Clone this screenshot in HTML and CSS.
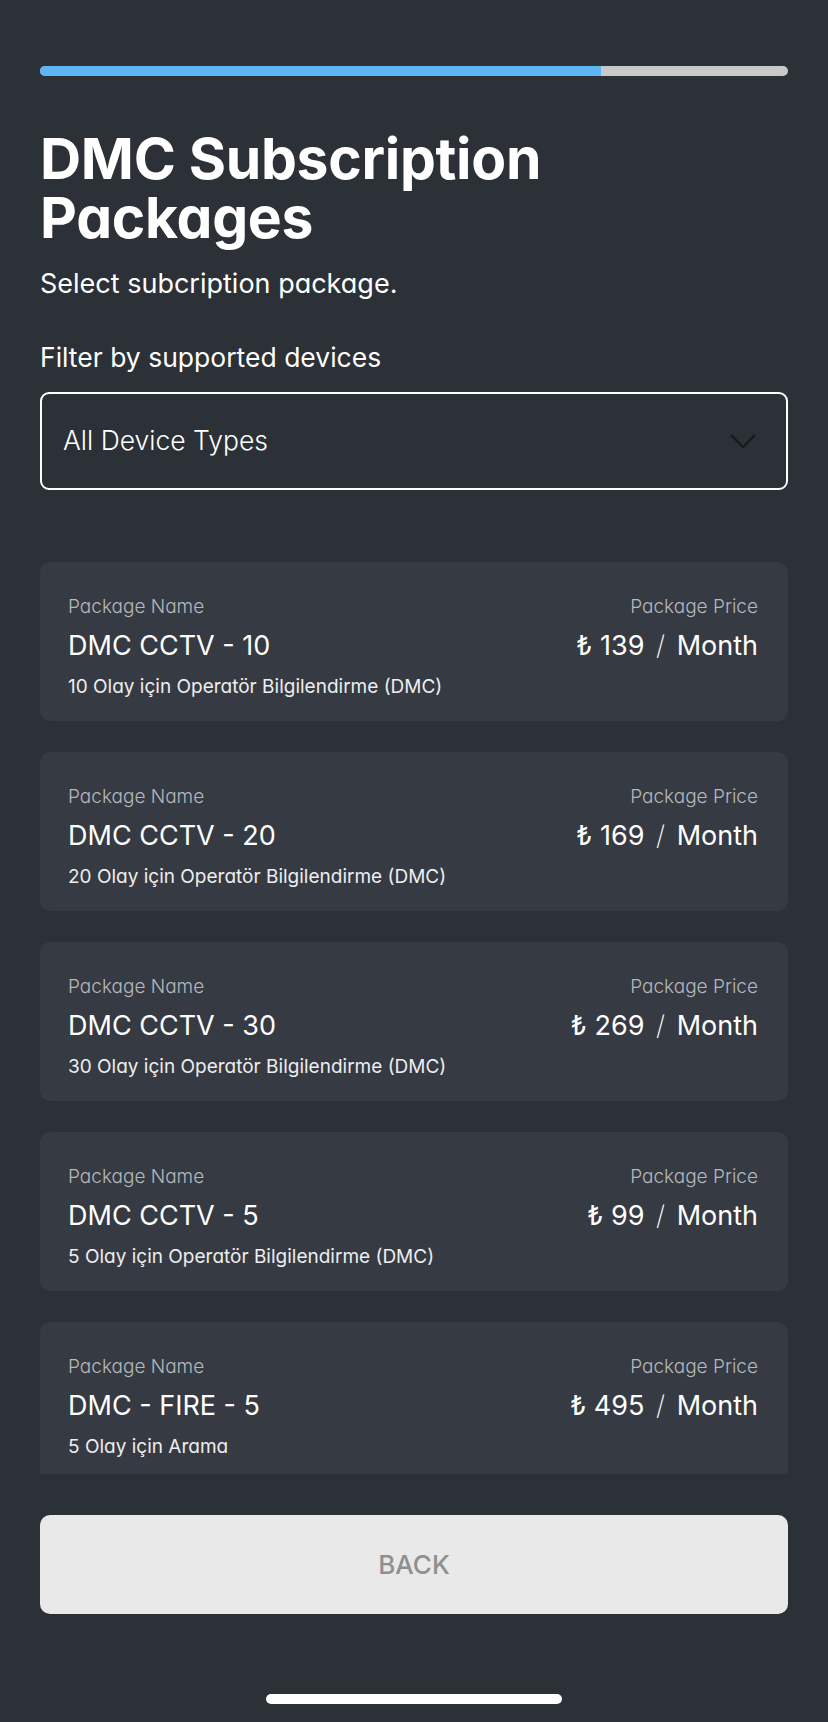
FILE: index.html
```html
<!DOCTYPE html>
<html lang="en">
<head>
    <meta charset="UTF-8">
    <meta name="viewport" content="width=device-width, initial-scale=1.0">
    <title>DMC Subscription Packages</title>
    <link rel="stylesheet" href="styles.css">
</head>
<body>

    <div class="screen">
        <!-- Progress -->
        <div class="progress">
            <div class="progress-fill" style="width: 75%"></div>
        </div>

        <h1 class="title">DMC Subscription Packages</h1>
        <p class="subtitle">Select subcription package.</p>

        <!-- Filter -->
        <div class="filter-label">Filter by supported devices</div>
        <div class="select">
            <span>All Device Types</span>
            <svg class="chevron" width="26" height="14" viewBox="0 0 26 14">
                <polyline points="1,1 13,13 25,1" fill="none" stroke="#16181b" stroke-width="2"/>
            </svg>
        </div>

        <!-- Package list -->
        <div class="package-list">
            <div class="package">
                <div class="package-info">
                    <div class="package-label">Package Name</div>
                    <div class="package-name">DMC CCTV - 10</div>
                    <div class="package-desc">10 Olay için Operatör Bilgilendirme (DMC)</div>
                </div>
                <div class="package-price">
                    <div class="package-label">Package Price</div>
                    <div class="price">₺ 139 <span class="slash">/</span> Month</div>
                </div>
            </div>
            <div class="package">
                <div class="package-info">
                    <div class="package-label">Package Name</div>
                    <div class="package-name">DMC CCTV - 20</div>
                    <div class="package-desc">20 Olay için Operatör Bilgilendirme (DMC)</div>
                </div>
                <div class="package-price">
                    <div class="package-label">Package Price</div>
                    <div class="price">₺ 169 <span class="slash">/</span> Month</div>
                </div>
            </div>
            <div class="package">
                <div class="package-info">
                    <div class="package-label">Package Name</div>
                    <div class="package-name">DMC CCTV - 30</div>
                    <div class="package-desc">30 Olay için Operatör Bilgilendirme (DMC)</div>
                </div>
                <div class="package-price">
                    <div class="package-label">Package Price</div>
                    <div class="price">₺ 269 <span class="slash">/</span> Month</div>
                </div>
            </div>
            <div class="package">
                <div class="package-info">
                    <div class="package-label">Package Name</div>
                    <div class="package-name">DMC CCTV - 5</div>
                    <div class="package-desc">5 Olay için Operatör Bilgilendirme (DMC)</div>
                </div>
                <div class="package-price">
                    <div class="package-label">Package Price</div>
                    <div class="price">₺ 99 <span class="slash">/</span> Month</div>
                </div>
            </div>
            <div class="package">
                <div class="package-info">
                    <div class="package-label">Package Name</div>
                    <div class="package-name">DMC - FIRE - 5</div>
                    <div class="package-desc">5 Olay için Arama</div>
                </div>
                <div class="package-price">
                    <div class="package-label">Package Price</div>
                    <div class="price">₺ 495 <span class="slash">/</span> Month</div>
                </div>
            </div>
        </div>

        <button class="back-btn">BACK</button>

        <div class="home-indicator"></div>
    </div>

</body>
</html>
```

FILE: styles.css
```css
/* General */
body {
    margin: 0;
    padding: 0;
    background-color: #2c3037;
    font-family: Inter, "Noto Sans", sans-serif;
    font-feature-settings: "cv11";
    color: #ffffff;
}

.screen {
    padding: 66px 40px 0;
    height: 1722px;
    box-sizing: border-box;
    display: flex;
    flex-direction: column;
}

/* Progress bar */
.progress {
    height: 10px;
    border-radius: 5px;
    background-color: #c9c9cb;
    overflow: hidden;
}

.progress-fill {
    height: 100%;
    background-color: #5db5f1;
}

/* Header */
.title {
    margin: 53px 0 0;
    font-size: 57px;
    line-height: 59px;
    font-weight: 700;
    letter-spacing: -0.3px;
    width: 580px;
}

.subtitle {
    margin: 21px 0 0;
    font-size: 27px;
    line-height: 32px;
    font-weight: 400;
}

/* Filter */
.filter-label {
    margin-top: 42px;
    font-size: 26.5px;
    line-height: 30px;
}

.select {
    margin-top: 20px;
    height: 98px;
    box-sizing: border-box;
    border: 2px solid #ffffff;
    border-radius: 9px;
    padding: 0 30px 0 21px;
    display: flex;
    align-items: center;
    justify-content: space-between;
    font-size: 26.5px;
    line-height: 30px;
    font-weight: 300;
}

.select span {
    margin-top: -3px;
}

/* Packages */
.package-list {
    margin-top: 72px;
    height: 912px;
    overflow: hidden;
    display: flex;
    flex-direction: column;
    gap: 31px;
}

.package {
    flex-shrink: 0;
    height: 159px;
    box-sizing: border-box;
    padding: 33px 30px 0 28px;
    background-color: #363a42;
    border-radius: 10px;
    display: flex;
    justify-content: space-between;
}

.package-price {
    text-align: right;
}

.package-label {
    font-size: 19px;
    line-height: 24px;
    font-weight: 300;
    color: #b4b8be;
}

.package-name,
.price {
    margin-top: 10px;
    font-size: 27px;
    line-height: 34px;
    font-weight: 400;
}

.slash {
    font-weight: 200;
    margin: 0 4px;
}

.package-desc {
    margin-top: 12px;
    font-size: 19px;
    line-height: 24px;
    font-weight: 400;
    color: #eceef0;
}

/* Back button */
.back-btn {
    margin-top: 41px;
    height: 99px;
    border: none;
    border-radius: 10px;
    background-color: #e9e9e9;
    color: #8f8f8f;
    font-family: inherit;
    font-size: 26px;
    font-weight: 500;
}

.home-indicator {
    margin: 80px auto 0;
    width: 296px;
    height: 10px;
    border-radius: 5px;
    background-color: #ffffff;
}
```
